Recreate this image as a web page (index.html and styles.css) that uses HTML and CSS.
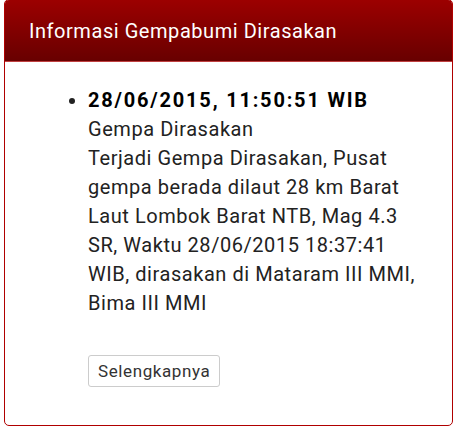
FILE: index.html
```html
<!DOCTYPE html>
<html>
<head>
<meta charset="utf-8">
<link rel="stylesheet" href="styles.css">
</head>
<body>
<div class="panel">
  <div class="panel-heading">Informasi Gempabumi Dirasakan</div>
  <div class="panel-body">
    <ul class="list">
      <li>
        <strong class="date">28/06/2015, 11:50:51 WIB</strong><br>
        Gempa Dirasakan<br>
        Terjadi Gempa Dirasakan, Pusat gempa berada dilaut 28 km Barat Laut Lombok Barat NTB, Mag 4.3 SR, Waktu 28/06/2015 18:37:41 WIB, dirasakan di Mataram III MMI, Bima III MMI
      </li>
    </ul>
    <button class="btn">Selengkapnya</button>
  </div>
</div>
</body>
</html>
```
FILE: styles.css
```css
html, body {
  margin: 0;
  padding: 0;
  background: #fff;
}
body {
  font-family: Roboto, "Liberation Sans", sans-serif;
  color: #222;
}
.panel {
  margin: -1px 4px 0 4px;
  width: 449px;
  height: 427px;
  box-sizing: border-box;
  border: 1px solid #b00000;
  border-radius: 5px;
  overflow: hidden;
  display: flex;
  flex-direction: column;
}
.panel-heading {
  height: 62px;
  box-sizing: border-box;
  padding: 0 24px;
  display: flex;
  align-items: center;
  color: #fff;
  font-size: 20px;
  letter-spacing: 0.55px;
  background: linear-gradient(to bottom, #9c0000, #680000);
  border-bottom: 1px solid #c04040;
}
.panel-body {
  padding: 24px 0 0 0;
}
.list {
  margin: 0;
  padding-left: 83px;
  padding-right: 20px;
  font-size: 20px;
  line-height: 29px;
  letter-spacing: 0.55px;
}
.date {
  color: #000;
  letter-spacing: 1.8px;
}
.btn {
  margin: 37px 0 0 83px;
  height: 32px;
  padding: 0 9px;
  font-family: Roboto, "Liberation Sans", sans-serif;
  font-size: 17px;
  letter-spacing: 0.6px;
  color: #333;
  background: #fff;
  border: 1px solid #ccc;
  border-radius: 3px;
}
```
